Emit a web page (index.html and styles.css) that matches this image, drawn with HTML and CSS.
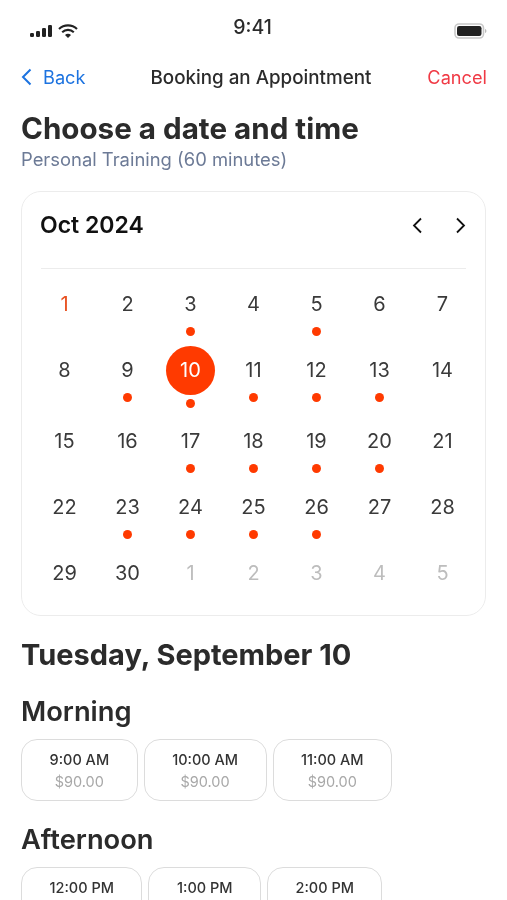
FILE: index.html
```html
<!DOCTYPE html>
<html lang="en">
<head>
<meta charset="utf-8">
<title>Booking an Appointment</title>
<link rel="stylesheet" href="styles.css">
</head>
<body>
<div class="screen">
  <div class="status">
    <div class="status-left">
      <svg class="signal" width="22" height="12" viewBox="0 0 22 12"><rect x="0" y="8" width="4" height="4" rx="1.2"/><rect x="6" y="6" width="4" height="6" rx="1.2"/><rect x="12" y="3" width="4" height="9" rx="1.2"/><rect x="18" y="0" width="4" height="12" rx="1.2"/></svg>
      <svg class="wifi" width="20" height="14" viewBox="0 0 20 14"><path d="M1 5a13 13 0 0 1 18 0" fill="none" stroke="#222" stroke-width="2.1"/><path d="M4.2 8.2a8.4 8.4 0 0 1 11.6 0" fill="none" stroke="#222" stroke-width="2.1"/><path d="M10 14l-3-3.1a4.2 4.2 0 0 1 6 0z" fill="#222"/></svg>
    </div>
    <div class="clock">9:41</div>
    <svg class="battery" width="33" height="16" viewBox="0 0 33 16"><rect x="1" y="1" width="28.500" height="14" rx="4" fill="none" stroke="#c8c8c8" stroke-width="1.600"/><rect x="3" y="3" width="24.500" height="10" rx="2.200" fill="#222"/><path d="M31 6v4c.9-.3 1.400-1.100 1.400-2s-.5-1.700-1.400-2z" fill="#bbb"/></svg>
  </div>

  <nav class="nav">
    <a class="back"><svg width="11" height="18" viewBox="0 0 11 18"><path d="M9.500 1.500L2 9l7.500 7.500" fill="none" stroke="#1c73e0" stroke-width="2"/></svg><span>Back</span></a>
    <div class="nav-title">Booking an Appointment</div>
    <a class="cancel">Cancel</a>
  </nav>

  <h1 class="title">Choose a date and time</h1>
  <p class="sub">Personal Training (60 minutes)</p>

  <section class="card">
    <div class="cal-head">
      <div class="month">Oct 2024</div>
      <div class="arrows">
        <svg width="11" height="17" viewBox="0 0 11 17"><path d="M9 1.500L2 8.500l7 7" fill="none" stroke="#111" stroke-width="1.800"/></svg>
        <svg width="11" height="17" viewBox="0 0 11 17"><path d="M2 1.500l7 7-7 7" fill="none" stroke="#111" stroke-width="1.800"/></svg>
      </div>
    </div>
    <div class="grid">
      <div class="cell"><span class="num first">1</span></div>
      <div class="cell"><span class="num">2</span></div>
      <div class="cell"><span class="num">3</span><i class="dot"></i></div>
      <div class="cell"><span class="num">4</span></div>
      <div class="cell"><span class="num">5</span><i class="dot"></i></div>
      <div class="cell"><span class="num">6</span></div>
      <div class="cell"><span class="num">7</span></div>

      <div class="cell"><span class="num">8</span></div>
      <div class="cell"><span class="num">9</span><i class="dot"></i></div>
      <div class="cell selected"><span class="num">10</span><i class="dot"></i></div>
      <div class="cell"><span class="num">11</span><i class="dot"></i></div>
      <div class="cell"><span class="num">12</span><i class="dot"></i></div>
      <div class="cell"><span class="num">13</span><i class="dot"></i></div>
      <div class="cell"><span class="num">14</span></div>

      <div class="cell"><span class="num">15</span></div>
      <div class="cell"><span class="num">16</span></div>
      <div class="cell"><span class="num">17</span><i class="dot"></i></div>
      <div class="cell"><span class="num">18</span><i class="dot"></i></div>
      <div class="cell"><span class="num">19</span><i class="dot"></i></div>
      <div class="cell"><span class="num">20</span><i class="dot"></i></div>
      <div class="cell"><span class="num">21</span></div>

      <div class="cell"><span class="num">22</span></div>
      <div class="cell"><span class="num">23</span><i class="dot"></i></div>
      <div class="cell"><span class="num">24</span><i class="dot"></i></div>
      <div class="cell"><span class="num">25</span><i class="dot"></i></div>
      <div class="cell"><span class="num">26</span><i class="dot"></i></div>
      <div class="cell"><span class="num">27</span></div>
      <div class="cell"><span class="num">28</span></div>

      <div class="cell"><span class="num">29</span></div>
      <div class="cell"><span class="num">30</span></div>
      <div class="cell"><span class="num muted">1</span></div>
      <div class="cell"><span class="num muted">2</span></div>
      <div class="cell"><span class="num muted">3</span></div>
      <div class="cell"><span class="num muted">4</span></div>
      <div class="cell"><span class="num muted">5</span></div>
    </div>
  </section>

  <h2 class="day-title">Tuesday, September 10</h2>

  <h3 class="period">Morning</h3>
  <div class="slots">
    <div class="slot"><div class="time">9:00 AM</div><div class="price">$90.00</div></div>
    <div class="slot"><div class="time">10:00 AM</div><div class="price">$90.00</div></div>
    <div class="slot"><div class="time">11:00 AM</div><div class="price">$90.00</div></div>
  </div>

  <h3 class="period">Afternoon</h3>
  <div class="slots">
    <div class="slot"><div class="time">12:00 PM</div><div class="price">$90.00</div></div>
    <div class="slot"><div class="time">1:00 PM</div><div class="price">$90.00</div></div>
    <div class="slot"><div class="time">2:00 PM</div><div class="price">$90.00</div></div>
  </div>
</div>
</body>
</html>
```
FILE: styles.css
```css
* { box-sizing: border-box; }
html, body { margin: 0; padding: 0; background: #fff; }
body { height: 900px; overflow: hidden; font-family: Inter, "Liberation Sans", sans-serif; color: #2b2b2b; }
.screen { padding: 0 21px; filter: blur(0.35px); }

.status { height: 54px; display: flex; align-items: center; justify-content: space-between; padding: 0 0 0 9px; position: relative; }
.status-left { display: flex; align-items: center; gap: 6px; margin-top: 7px; }
.signal { fill: #222; }
.clock { position: absolute; left: 0; right: 0; top: 15px; text-align: center; font-size: 19.5px; line-height: 24px; font-weight: 500; padding-right: 2px; }
.battery { margin-top: 7px; margin-right: -1px; margin-left: auto; }

.nav { height: 46px; display: flex; align-items: center; justify-content: space-between; font-size: 18.2px; }
.back { display: flex; align-items: center; gap: 11px; color: #1c73e0; }
.nav-title { font-size: 18.8px; font-weight: 500; color: #2b2b2b; margin-left: 9px; }
.cancel { color: #f03a45; margin-right: -1px; }

.title { margin: 10px 0 0; font-size: 29.6px; line-height: 36px; font-weight: 700; }
.sub { margin: 2px 0 0; font-size: 18.4px; line-height: 22px; color: #6c7a96; }

.card { margin-top: 21px; height: 425px; border: 1.5px solid #ececec; border-radius: 20px; padding: 0 11px; }
.cal-head { margin: 0 8px; height: 77px; display: flex; align-items: center; justify-content: space-between; border-bottom: 1.5px solid #ececec; padding: 0 0 10px; }
.month { font-size: 23px; font-weight: 600; color: #111; margin-left: -1px; }
.arrows { display: flex; gap: 32px; margin-top: 1px; }

.grid { display: grid; grid-template-columns: repeat(7, 63px); row-gap: 19px; padding-top: 20px; }
.cell { display: flex; flex-direction: column; align-items: center; gap: 8px; }
.num { height: 30px; line-height: 30px; font-size: 20px; color: #3a3a3a; }
.num.first { color: #e8501f; }
.num.muted { color: #bdbdbd; }
.dot { display: block; width: 9px; height: 9px; border-radius: 50%; background: #ff3a00; }
.selected { margin-top: -9.5px; margin-bottom: -0.5px; gap: 4px; }
.selected .num { width: 49px; height: 49px; line-height: 49px; text-align: center; border-radius: 50%; background: #ff3a00; color: #fff; }

.day-title { margin: 21px 0 0; font-size: 29px; line-height: 36px; font-weight: 700; }
.period { margin: 23px 0 0; font-size: 27.3px; line-height: 32px; font-weight: 600; }
.slots { display: flex; gap: 6px; margin-top: 11px; }
.slot { height: 62px; border: 1.5px solid #dcdcdc; border-radius: 16px; padding: 11px 27.5px 0; text-align: center; }
.time { font-size: 14.5px; line-height: 18px; font-weight: 500; color: #333; }
.price { font-size: 14.5px; line-height: 18px; margin-top: 4px; color: #a8a8a8; }
```
